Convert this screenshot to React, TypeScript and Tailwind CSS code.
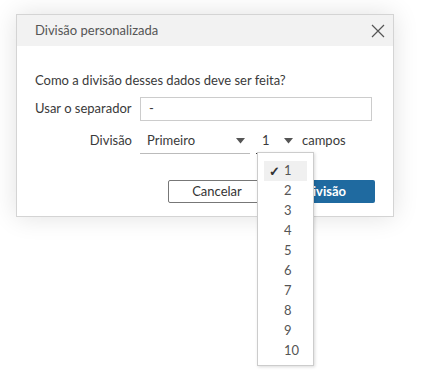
import React from 'react';

const items = ['1', '2', '3', '4', '5', '6', '7', '8', '9', '10'];

const Caret = () => (
  <svg width="9" height="6" viewBox="0 0 9 6" className="fill-[#555]">
    <path d="M0 0h9L4.5 5.5z" />
  </svg>
);

const App: React.FC = () => {
  return (
    <div className="w-[423px] h-[384px] bg-white pt-[14px] pl-[16px] font-['Lato','Noto_Sans',sans-serif] text-[13px] text-[#3a3a3a]">
      {/* Dialog */}
      <div className="relative w-[378px] h-[203px] bg-white border border-[#d4d4d4] shadow-[0_0_24px_rgba(0,0,0,0.12)]">
        <div className="h-[31px] bg-[#f2f2f2] flex items-center justify-between pl-[18px] pr-[8px]">
          <span className="text-[#555]">Divisão personalizada</span>
          <svg width="14" height="14" viewBox="0 0 14 14" className="stroke-[#555]">
            <path d="M1 1L13 13M13 1L1 13" strokeWidth="1.2" />
          </svg>
        </div>

        <div className="pl-[18px] pr-[18px] pt-[25px]">
          <p className="leading-[18px]">Como a divisão desses dados deve ser feita?</p>

          <div className="flex items-center mt-[8px] mr-[3px]">
            <span className="w-[105px]">Usar o separador</span>
            <div className="flex-1 h-[24px] border border-[#ccc] flex items-center pl-[8px]">-</div>
          </div>

          <div className="flex items-center mt-[7px] h-[26px]">
            <span className="w-[105px] text-right pr-[8px]">Divisão</span>
            <div className="w-[110px] h-full border-b border-[#bbb] flex items-center justify-between pl-[7px] pr-[5px]">
              <span>Primeiro</span>
              <Caret />
            </div>
            <div className="ml-[6px] w-[40px] h-full border-b border-[#333] flex items-center justify-between pl-[6px] pr-[3px]">
              <span>1</span>
              <Caret />
            </div>
            <span className="ml-[6px]">campos</span>
          </div>

          <div className="flex justify-end gap-[8px] mt-[26px]">
            <button className="w-[98px] h-[23px] border border-[#777] rounded-[2px] text-[#333]">Cancelar</button>
            <button className="w-[101px] h-[23px] bg-[#1f6aa0] rounded-[2px] text-white font-bold">Divisão</button>
          </div>
        </div>

        {/* Dropdown list */}
        <div className="absolute left-[240px] top-[137px] w-[57px] bg-white border border-[#ccc] shadow-[1px_1px_3px_rgba(0,0,0,0.15)] pt-[8px] pb-[4px] px-[6px]">
          {items.map((n) => (
            <div
              key={n}
              className={`h-[20px] flex items-center ${n === '1' ? 'bg-[#f0f0f0]' : ''}`}
            >
              <span className="w-[20px] pl-[5px] text-[13px] font-bold leading-none text-[#333]">{n === '1' ? '✓' : ''}</span>
              <span className="text-[#555]">{n}</span>
            </div>
          ))}
        </div>
      </div>
    </div>
  );
};

export default App;
